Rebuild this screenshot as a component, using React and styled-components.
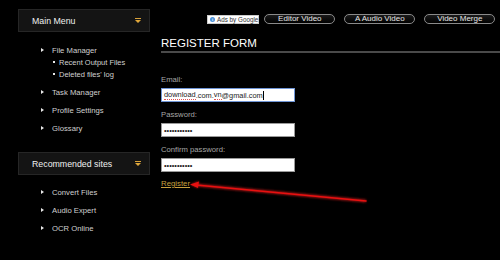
import React from "react";
import styled, { createGlobalStyle } from "styled-components";

const Global = createGlobalStyle`
  html, body { margin: 0; padding: 0; background: #000; }
  body { font-family: "Liberation Sans", Arial, sans-serif; width: 500px; height: 260px; overflow: hidden; }
  #root { position: relative; }
`;

const Page = styled.div`
  display: flex;
  width: 500px;
  height: 260px;
  background: #000;
  overflow: hidden;
`;

const Sidebar = styled.aside`
  width: 150px;
  flex: 0 0 150px;
  box-sizing: border-box;
  padding: 9px 0 0 18px;
`;

const MenuHeader = styled.div`
  box-sizing: border-box;
  width: 132px;
  height: 23px;
  margin-top: ${(p) => p.$mt || 0}px;
  background: #141414;
  border: 1px solid #262626;
  display: flex;
  align-items: center;
  justify-content: space-between;
  padding: 0 8px 0 13px;
  color: #f0f0f0;
  font-size: 8.8px;
`;

const Caret = styled.span`
  display: flex;
  flex-direction: column;
  align-items: center;
  &::before {
    content: "";
    width: 6px;
    height: 1px;
    background: #d9a23a;
    margin-bottom: 1px;
  }
  &::after {
    content: "";
    width: 0;
    height: 0;
    border-left: 3px solid transparent;
    border-right: 3px solid transparent;
    border-top: 3px solid #e0a73a;
  }
`;

const MenuList = styled.ul`
  list-style: none;
  margin: 0;
  padding: ${(p) => p.$pt}px 0 0 23px;
`;

const MenuItem = styled.li`
  color: #d0d0d0;
  font-size: 7.7px;
`;

const ItemRow = styled.div`
  height: 18px;
  display: flex;
  align-items: center;
  gap: 8px;
  &::before {
    content: "";
    width: 0;
    height: 0;
    border-top: 2px solid transparent;
    border-bottom: 2px solid transparent;
    border-left: 3px solid #e8e8e8;
  }
`;

const SubList = styled.ul`
  list-style: none;
  margin: -3px 0 0 0;
  padding: 0 0 3px 12px;
`;

const SubItem = styled.li`
  height: 12px;
  display: flex;
  align-items: center;
  gap: 4px;
  color: #d0d0d0;
  font-size: 7.5px;
  &::before {
    content: "";
    width: 2px;
    height: 2px;
    background: #e8e8e8;
  }
`;

const Main = styled.main`
  flex: 1;
  padding: 14px 0 0 11px;
  min-width: 0;
`;

const TopBar = styled.div`
  display: flex;
  align-items: center;
  height: 10px;
  margin-left: 46px;
  white-space: nowrap;
`;

const Ads = styled.div`
  box-sizing: border-box;
  width: 61px;
  height: 9px;
  background: #fff;
  border: 1px solid #ccc;
  display: flex;
  align-items: center;
  gap: 2px;
  padding-left: 2px;
  font-size: 6.3px;
  color: #333;
  margin-right: 5px;
`;

const InfoDot = styled.span`
  width: 5px;
  height: 5px;
  border-radius: 50%;
  background: #4a90d9;
  color: #fff;
  font-size: 4px;
  line-height: 5px;
  text-align: center;
  font-weight: bold;
`;

const Pill = styled.span`
  box-sizing: border-box;
  flex: 0 0 71px;
  height: 10px;
  border: 1px solid #8a8a8a;
  border-radius: 6px;
  background: linear-gradient(#1a1a1a, #000);
  color: #e6e6e6;
  font-size: 8px;
  line-height: 8px;
  text-align: center;
  margin-right: 9px;
`;

const Heading = styled.h1`
  margin: 12px 0 0 0;
  height: 14px;
  line-height: 14px;
  font-size: 11.5px;
  font-weight: normal;
  color: #fff;
  padding-bottom: 1px;
  border-bottom: 2px solid #4a4a4a;
`;

const Form = styled.form`
  display: flex;
  flex-direction: column;
  align-items: flex-start;
  padding-top: 22px;
`;

const Field = styled.div`
  display: flex;
  flex-direction: column;
  gap: 3px;
  margin-bottom: 8px;
`;

const Label = styled.label`
  height: 10px;
  line-height: 10px;
  font-size: 7.7px;
  color: #a6a6a6;
`;

const Input = styled.div`
  box-sizing: border-box;
  width: 134px;
  height: 14px;
  background: #fff;
  border: 1px solid ${(p) => (p.$focus ? "#6f95d6" : "#9a9a9a")};
  display: flex;
  align-items: center;
  padding-left: 2px;
  font-size: 7.4px;
  color: #222;
  white-space: nowrap;
`;

const Misspelled = styled.span`
  line-height: 8px;
  border-bottom: 1px dotted #e05050;
`;

const Cursor = styled.span`
  width: 1px;
  height: 9px;
  background: #000;
`;

const RegisterLink = styled.a`
  margin-top: -1px;
  height: 10px;
  line-height: 10px;
  font-size: 7.8px;
  color: #c9a13f;
  text-decoration: underline;
`;

const Overlay = styled.svg`
  position: absolute;
  left: 0;
  top: 0;
  pointer-events: none;
`;

const menu = [
  { label: "File Manager", sub: ["Recent Output Files", "Deleted files' log"] },
  { label: "Task Manager" },
  { label: "Profile Settings" },
  { label: "Glossary" },
];
const sites = ["Convert Files", "Audio Expert", "OCR Online"];
const dots = "•••••••••••";

export default function App() {
  return (
    <>
      <Global />
      <Page>
        <Sidebar>
          <MenuHeader>
            Main Menu
            <Caret />
          </MenuHeader>
          <MenuList $pt={9}>
            {menu.map((m) => (
              <MenuItem key={m.label}>
                <ItemRow>{m.label}</ItemRow>
                {m.sub && (
                  <SubList>
                    {m.sub.map((s) => (
                      <SubItem key={s}>{s}</SubItem>
                    ))}
                  </SubList>
                )}
              </MenuItem>
            ))}
          </MenuList>
          <MenuHeader $mt={15}>
            Recommended sites
            <Caret />
          </MenuHeader>
          <MenuList $pt={8}>
            {sites.map((s) => (
              <MenuItem key={s}>
                <ItemRow>{s}</ItemRow>
              </MenuItem>
            ))}
          </MenuList>
        </Sidebar>
        <Main>
          <TopBar>
            <Ads>
              <InfoDot>i</InfoDot>
              Ads by Google
            </Ads>
            <Pill>Editor Video</Pill>
            <Pill>A Audio Video</Pill>
            <Pill>Video Merge</Pill>
          </TopBar>
          <Heading>REGISTER FORM</Heading>
          <Form>
            <Field>
              <Label>Email:</Label>
              <Input $focus>
                <Misspelled>download</Misspelled>.com.<Misspelled>vn</Misspelled>@gmail.com
                <Cursor />
              </Input>
            </Field>
            <Field>
              <Label>Password:</Label>
              <Input>{dots}</Input>
            </Field>
            <Field>
              <Label>Confirm password:</Label>
              <Input>{dots}</Input>
            </Field>
            <RegisterLink href="#">Register</RegisterLink>
          </Form>
        </Main>
      </Page>
      <Overlay width="500" height="260" viewBox="0 0 500 260">
        <defs>
          <filter id="glow" x="-10%" y="-50%" width="120%" height="200%">
            <feGaussianBlur stdDeviation="0.8" />
          </filter>
        </defs>
        <g filter="url(#glow)" opacity="0.6">
          <line x1="366" y1="201" x2="196" y2="185" stroke="#ff2020" strokeWidth="3" />
          <polygon points="190,184.5 199,181 198,188.5" fill="#ff2020" />
        </g>
        <line x1="366" y1="201" x2="196" y2="185" stroke="#e81010" strokeWidth="1.6" strokeLinecap="round" />
        <polygon points="190,184.5 199,181.5 198,188" fill="#e81010" />
      </Overlay>
    </>
  );
}
